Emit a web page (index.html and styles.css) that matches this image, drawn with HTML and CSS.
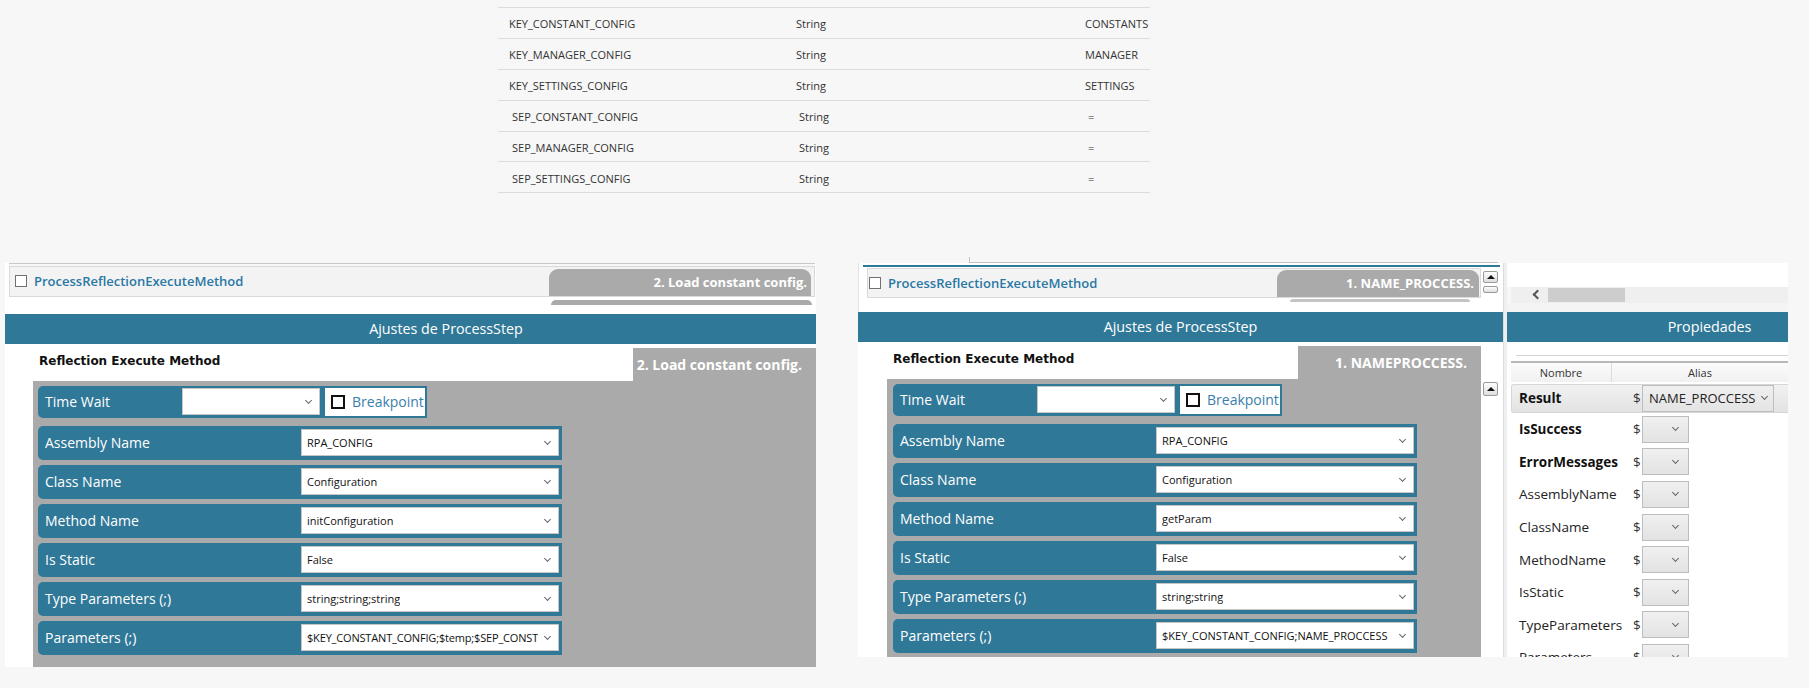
FILE: index.html
```html
<!DOCTYPE html>
<html>
<head>
<meta charset="utf-8">
<title>ProcessStep</title>
<link rel="stylesheet" href="styles.css">
</head>
<body>
<div class="vars">
  <div class="vrow"><span>KEY_CONSTANT_CONFIG</span><span>String</span><span>CONSTANTS</span></div>
  <div class="vrow"><span>KEY_MANAGER_CONFIG</span><span>String</span><span>MANAGER</span></div>
  <div class="vrow"><span>KEY_SETTINGS_CONFIG</span><span>String</span><span>SETTINGS</span></div>
  <div class="vrow shift"><span>SEP_CONSTANT_CONFIG</span><span>String</span><span>=</span></div>
  <div class="vrow shift"><span>SEP_MANAGER_CONFIG</span><span>String</span><span>=</span></div>
  <div class="vrow shift"><span>SEP_SETTINGS_CONFIG</span><span>String</span><span>=</span></div>
</div>

<div class="panels">
  <section class="col col-left">
    <div class="steps">
      <div class="step-frame">
        <div class="step">
          <span class="chk"></span>
          <span class="step-name">ProcessReflectionExecuteMethod</span>
          <span class="step-tab">2. Load constant config.</span>
        </div>
      </div>
      <div class="step-next"></div>
    </div>
    <div class="bar bar-left">Ajustes de ProcessStep</div>
    <div class="body body-left">
      <div class="titlebar">
        <span class="title">Reflection Execute Method</span>
        <span class="tab">2. Load constant config.</span>
      </div>
      <div class="form form-left">
        <div class="trow">
          <div class="tlab">Time Wait<span class="dd"><span class="chev"></span></span></div>
          <div class="bp"><span class="bpbox"></span><span class="bptxt">Breakpoint</span></div>
        </div>
        <div class="frow"><span class="lab">Assembly Name</span><span class="inp"><span class="val">RPA_CONFIG</span><span class="chev"></span></span></div>
        <div class="frow"><span class="lab">Class Name</span><span class="inp"><span class="val">Configuration</span><span class="chev"></span></span></div>
        <div class="frow"><span class="lab">Method Name</span><span class="inp"><span class="val">initConfiguration</span><span class="chev"></span></span></div>
        <div class="frow"><span class="lab">Is Static</span><span class="inp"><span class="val">False</span><span class="chev"></span></span></div>
        <div class="frow"><span class="lab">Type Parameters (;)</span><span class="inp"><span class="val">string;string;string</span><span class="chev"></span></span></div>
        <div class="frow"><span class="lab">Parameters (;)</span><span class="inp"><span class="val tight">$KEY_CONSTANT_CONFIG;$temp;$SEP_CONST</span><span class="chev"></span></span></div>
      </div>
    </div>
  </section>

  <section class="col col-mid">
    <div class="prev"></div>
    <div class="mtop">
      <div class="tealline"></div>
      <div class="mstep-row">
        <div class="step mstep">
          <span class="chk"></span>
          <span class="step-name">ProcessReflectionExecuteMethod</span>
          <span class="step-tab mtab">1. NAME_PROCCESS.</span>
        </div>
        <div class="vscroll">
          <span class="sbtn"><span class="tri"></span></span>
          <span class="sbtn small"></span>
        </div>
      </div>
      <div class="step-next thin"></div>
    </div>
    <div class="bar">Ajustes de ProcessStep</div>
    <div class="body body-mid">
      <div class="titlebar mtitlebar">
        <span class="title">Reflection Execute Method</span>
        <span class="tab">1. NAMEPROCCESS.</span>
      </div>
      <div class="mcontent">
        <div class="form form-mid">
          <div class="trow">
            <div class="tlab">Time Wait<span class="dd"><span class="chev"></span></span></div>
            <div class="bp"><span class="bpbox"></span><span class="bptxt">Breakpoint</span></div>
          </div>
          <div class="frow"><span class="lab">Assembly Name</span><span class="inp"><span class="val">RPA_CONFIG</span><span class="chev"></span></span></div>
          <div class="frow"><span class="lab">Class Name</span><span class="inp"><span class="val">Configuration</span><span class="chev"></span></span></div>
          <div class="frow"><span class="lab">Method Name</span><span class="inp"><span class="val">getParam</span><span class="chev"></span></span></div>
          <div class="frow"><span class="lab">Is Static</span><span class="inp"><span class="val">False</span><span class="chev"></span></span></div>
          <div class="frow"><span class="lab">Type Parameters (;)</span><span class="inp"><span class="val">string;string</span><span class="chev"></span></span></div>
          <div class="frow"><span class="lab">Parameters (;)</span><span class="inp"><span class="val">$KEY_CONSTANT_CONFIG;NAME_PROCCESS</span><span class="chev"></span></span></div>
        </div>
        <div class="vscroll2"><span class="sbtn"><span class="tri"></span></span></div>
      </div>
    </div>
  </section>

  <div class="divider"></div>

  <section class="col col-right">
    <div class="rtop"></div>
    <div class="hscroll"><span class="larr"></span><span class="thumb"></span></div>
    <div class="rgap"></div>
    <div class="bar bar-right">Propiedades</div>
    <div class="body body-right">
      <div class="line1"></div>
      <div class="line2"></div>
      <div class="colhdr"><span class="ch1">Nombre</span><span class="ch2">Alias</span></div>
      <div class="prow result"><span class="pname b">Result</span><span class="dol">$</span><span class="pdd wide"><span class="pval">NAME_PROCCESS</span><span class="chev"></span></span></div>
      <div class="prow"><span class="pname b">IsSuccess</span><span class="dol">$</span><span class="pdd"><span class="chev"></span></span></div>
      <div class="prow"><span class="pname b">ErrorMessages</span><span class="dol">$</span><span class="pdd"><span class="chev"></span></span></div>
      <div class="prow"><span class="pname">AssemblyName</span><span class="dol">$</span><span class="pdd"><span class="chev"></span></span></div>
      <div class="prow"><span class="pname">ClassName</span><span class="dol">$</span><span class="pdd"><span class="chev"></span></span></div>
      <div class="prow"><span class="pname">MethodName</span><span class="dol">$</span><span class="pdd"><span class="chev"></span></span></div>
      <div class="prow"><span class="pname">IsStatic</span><span class="dol">$</span><span class="pdd"><span class="chev"></span></span></div>
      <div class="prow"><span class="pname">TypeParameters</span><span class="dol">$</span><span class="pdd"><span class="chev"></span></span></div>
      <div class="prow"><span class="pname">Parameters</span><span class="dol">$</span><span class="pdd"><span class="chev"></span></span></div>
    </div>
  </section>
</div>
</body>
</html>
```

FILE: styles.css
```css
* { box-sizing: border-box; }

body {
  margin: 0;
  width: 1809px;
  height: 688px;
  overflow: hidden;
  background: #f7f7f7;
  font-family: "Open Sans", "Noto Sans", sans-serif;
  color: #222;
}

/* ---------- top variable table ---------- */
.vars {
  margin: 7px 0 0 498px;
  width: 652px;
  border-top: 1px solid #dcdcdc;
}
.vrow {
  display: grid;
  grid-template-columns: 287px 289px 1fr;
  align-items: center;
  height: 30.9px;
  padding: 2px 0 0 11px;
  border-bottom: 1px solid #dcdcdc;
  font-size: 11px;
  color: #333;
  white-space: nowrap;
}
.vrow.shift { padding-left: 14px; }

/* ---------- panels ---------- */
.panels {
  display: flex;
  align-items: flex-start;
  margin-top: 56.6px;
  padding-left: 5px;
}
.col { display: flex; flex-direction: column; }
.col-left { width: 811px; padding-top: 13px; }
.col-mid { width: 645px; margin-left: 42px; }
.col-right { width: 281px; padding-top: 13px; }

.divider {
  width: 4px;
  height: 394px;
  margin-top: 13px;
  background: #efefef;
  border-left: 1px solid #dcdcdc;
}

/* step strip */
.steps {
  height: 51px;
  background: #fff;
}
.step-frame {
  margin: 0 1px 0 4px;
  border-top: 1px solid #c9c9c9;
  padding-top: 2px;
  background: #f7f7f7;
}
.step {
  height: 31px;
  display: flex;
  align-items: center;
  padding-left: 5px;
  border: 1px solid #d9d9d9;
  background: #f3f3f3;
}
.chk {
  width: 12px;
  height: 12px;
  border: 1px solid #707070;
  background: #fff;
  flex: none;
}
.step-name {
  margin-left: 7px;
  font-size: 13px;
  font-weight: 600;
  color: #2a78a4;
  white-space: nowrap;
}
.step-tab {
  align-self: flex-end;
  margin-left: auto;
  margin-right: 3px;
  width: 262px;
  height: 27px;
  padding-right: 4px;
  border-radius: 9px 9px 0 0;
  background: #aaaaaa;
  color: #fff;
  font-size: 13px;
  font-weight: 700;
  line-height: 27px;
  text-align: right;
  white-space: nowrap;
}
.step-next {
  margin: 3px 4px 0 auto;
  width: 261px;
  height: 5px;
  border-radius: 8px 8px 0 0;
  background: #aaaaaa;
}
.step-next.thin {
  margin: 1px 33px 0 auto;
  width: 180px;
  height: 3px;
  border-radius: 3px 3px 0 0;
  background: #c4c4c4;
}

/* headers */
.bar {
  height: 30px;
  background: #307898;
  color: #fff;
  font-size: 14.3px;
  line-height: 30px;
  text-align: center;
  white-space: nowrap;
  overflow: hidden;
}
.bar-left { padding-left: 71px; }
.bar-right { padding-left: 124px; }

/* bodies */
.body { background: #fff; overflow: hidden; }
.body-left { height: 323px; }
.body-mid { height: 315px; }
.body-right { height: 315px; }

.titlebar {
  height: 37px;
  display: flex;
  justify-content: space-between;
  align-items: flex-start;
}
.title {
  padding: 10px 0 0 34px;
  font-family: "DejaVu Sans", Verdana, sans-serif;
  font-size: 12px;
  font-weight: 700;
  line-height: 14px;
  color: #111;
}
.mtitlebar .title { padding-left: 35px; }
.mtitlebar .tab { margin-right: 22px; }
.tab {
  margin-top: 4px;
  width: 183px;
  height: 33px;
  padding: 7px 14px 0 0;
  background: #aaaaaa;
  color: #fff;
  font-size: 14px;
  font-weight: 700;
  line-height: 19px;
  text-align: right;
  white-space: nowrap;
}

/* form */
.form {
  background: #aaaaaa;
  padding-top: 5px;
}
.form-left {
  margin-left: 28px;
  width: 783px;
  height: 286px;
  padding-left: 5px;
}
.mcontent { display: flex; }
.form-mid {
  margin-left: 29px;
  width: 594px;
  height: 278px;
  padding-left: 6px;
}

.trow {
  display: flex;
  height: 32px;
  margin-bottom: 8px;
}
.tlab {
  width: 285px;
  display: flex;
  align-items: center;
  padding-left: 7px;
  background: #307898;
  border-radius: 5px 0 0 5px;
  color: #fff;
  font-size: 14px;
}
.dd {
  margin-left: auto;
  margin-right: 3px;
  width: 138px;
  height: 27px;
  display: flex;
  align-items: center;
  justify-content: flex-end;
  padding-right: 8px;
  border: 1px solid #c6c6c6;
  background: #fff;
}
.bp {
  width: 104px;
  height: 32px;
  display: flex;
  align-items: center;
  padding-left: 6px;
  border: 2px solid #307898;
  background: #fff;
}
.bpbox {
  width: 14px;
  height: 14px;
  border: 2px solid #111;
  flex: none;
}
.bptxt {
  margin-left: 7px;
  font-size: 14px;
  color: #3a7fac;
}

.frow {
  display: flex;
  align-items: center;
  width: 524px;
  height: 34px;
  margin-bottom: 5px;
  background: #307898;
  border-radius: 5px 0 0 5px;
}
.lab {
  width: 263px;
  padding-left: 7px;
  color: #fff;
  font-size: 14px;
  white-space: nowrap;
}
.inp {
  width: 258px;
  height: 27px;
  display: flex;
  align-items: center;
  justify-content: space-between;
  gap: 6px;
  padding: 0 8px 0 5px;
  border: 1px solid #c6c6c6;
  background: #fff;
  font-size: 11px;
  color: #111;
}
.val { white-space: nowrap; overflow: hidden; }
.val.tight { letter-spacing: -0.17px; }

.chev {
  flex: none;
  width: 5px;
  height: 5px;
  margin-bottom: 3px;
  border-right: 1px solid #666;
  border-bottom: 1px solid #666;
  transform: rotate(45deg);
}

/* middle top */
.prev {
  height: 6px;
  margin-top: 7px;
  margin-left: 111px;
  margin-right: 5px;
  border-left: 1px solid #c2c2c2;
  border-bottom: 1px solid #c2c2c2;
}
.mtop {
  height: 49px;
  background: #fff;
  border-left: 1px solid #e2e2e2;
}
.tealline {
  height: 2px;
  margin: 2px 3px 0 4px;
  background: #307898;
}
.mstep-row {
  display: flex;
  margin-top: 1px;
}
.mstep {
  margin-left: 8px;
  width: 614px;
  height: 30px;
  padding-left: 1px;
}
.mtab {
  width: 202px;
  margin-right: 1px;
  padding-right: 5px;
}
.vscroll {
  margin-left: 2px;
  width: 15px;
  display: flex;
  flex-direction: column;
  gap: 3px;
  padding-top: 3px;
}
.sbtn {
  height: 12px;
  display: flex;
  align-items: center;
  justify-content: center;
  border: 1px solid #9a9a9a;
  border-radius: 2px;
  background: linear-gradient(#fdfdfd, #dedede);
}
.sbtn.small { height: 7px; }
.tri {
  width: 0;
  height: 0;
  border-left: 4px solid transparent;
  border-right: 4px solid transparent;
  border-bottom: 4px solid #111;
}
.vscroll2 {
  width: 17px;
  padding: 3px 0 0 2px;
}
.vscroll2 .sbtn { height: 14px; }

/* right panel */
.rtop { height: 24px; background: #fff; }
.hscroll {
  height: 16px;
  display: flex;
  align-items: center;
  margin-left: 4px;
  background: #efefef;
}
.larr {
  width: 7px;
  height: 7px;
  margin-left: 23px;
  border-left: 2px solid #555;
  border-bottom: 2px solid #555;
  transform: rotate(45deg);
}
.thumb {
  margin-left: 7px;
  width: 77px;
  height: 14px;
  background: #cdcdcd;
}
.rgap { height: 9px; background: #f4f4f4; }

.body-right { padding-top: 13px; }
.line1 { height: 1px; margin-left: 9px; background: #d4d4d4; }
.line2 { height: 2px; margin: 5px 0 0 4px; background: #b8b8b8; }
.colhdr {
  display: flex;
  height: 19px;
  margin-left: 4px;
  background: linear-gradient(#fbfbfb, #f1f1f1);
  font-size: 11px;
  line-height: 19px;
  color: #333;
}
.ch1 { width: 111px; text-align: center; border-right: 1px solid #dcdcdc; }
.ch2 { width: 176px; flex: none; text-align: center; }

.prow {
  display: flex;
  align-items: center;
  height: 32.6px;
  margin-left: 4px;
  font-size: 13.5px;
  color: #222;
  white-space: nowrap;
}
.prow.result {
  height: 29px;
  margin-top: 2px;
  border: 1px solid #d6d6d6;
  border-right: none;
  border-radius: 3px 0 0 3px;
  background: linear-gradient(#f1f1f1, #e3e3e3);
}
.pname { width: 122px; padding-left: 8px; flex: none; }
.prow.result .pname { width: 121px; padding-left: 7px; }
.pname.b { font-weight: 700; color: #111; }
.dol { width: 9px; flex: none; color: #333; }
.pdd {
  width: 47px;
  height: 27px;
  flex: none;
  display: flex;
  align-items: center;
  justify-content: flex-end;
  padding-right: 10px;
  border: 1px solid #bdbdbd;
  background: linear-gradient(#f0f0f0, #e3e3e3);
}
.pdd.wide {
  width: 132px;
  justify-content: space-between;
  padding: 0 6px 0 6px;
}
.pval { font-size: 13px; color: #222; }
```
